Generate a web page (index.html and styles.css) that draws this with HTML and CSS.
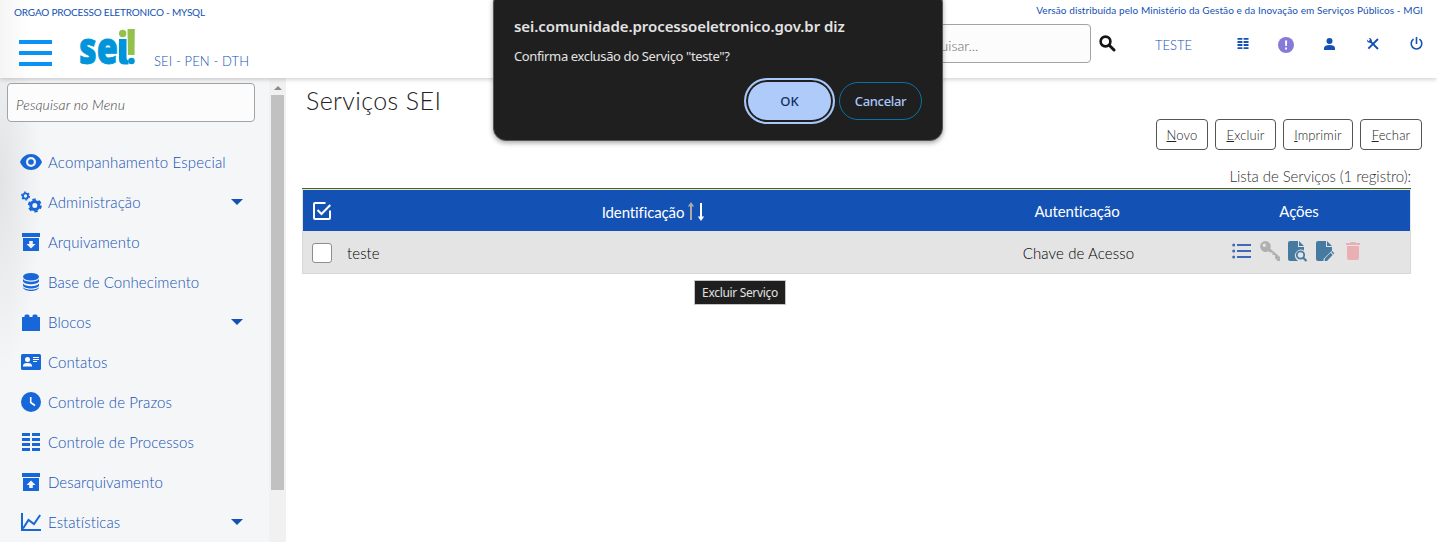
FILE: index.html
```html
<!DOCTYPE html>
<html lang="pt-BR">
<head>
<meta charset="utf-8">
<title>SEI - Serviços</title>
<link rel="stylesheet" href="styles.css">
</head>
<body>
<svg class="defs" width="0" height="0">
  <symbol id="rows" viewBox="0 0 18 18"><path d="M0 0h8v3H0zM10 0h8v3h-8zM0 5h8v3H0zM10 5h8v3h-8zM0 10h8v3H0zM10 10h8v3h-8zM0 15h8v3H0zM10 15h8v3h-8z"/></symbol>
  <symbol id="caret" viewBox="0 0 12 6"><path d="M0 0h12L6 6z"/></symbol>
</svg>
<header class="topbar">
  <div class="brand">
    <div class="org">ORGAO PROCESSO ELETRONICO - MYSQL</div>
    <div class="brand-row">
      <div class="burger"><i></i><i></i><i></i></div>
      <svg class="logo" width="58" height="42" viewBox="0 0 58 42">
        <text class="logo-text" x="0" y="36" textLength="39" lengthAdjust="spacingAndGlyphs">se</text>
        <path class="logo-blue" d="M40 11h7.500v19q0 2 2 2.500v4h-4q-5.500 0-5.500-5z"/>
        <circle class="logo-green" cx="43.700" cy="5.500" r="3.700"/>
        <path class="logo-green" d="M48.500 1h7.300l-.3 26h-6.500z"/>
        <circle class="logo-blue" cx="52.500" cy="33" r="3.300"/>
      </svg>
      <div class="system">SEI - PEN - DTH</div>
    </div>
  </div>
  <div class="tools">
    <div class="version">Versão distribuída pelo Ministério da Gestão e da Inovação em Serviços Públicos - MGI</div>
    <div class="tool-row">
      <div class="search">Pesquisar...</div>
      <svg class="lens" width="17" height="17" viewBox="0 0 17 17"><circle cx="6.500" cy="6.500" r="4.900" fill="none" stroke="#151515" stroke-width="2.600"/><path d="M10 10l5 5" stroke="#151515" stroke-width="3" stroke-linecap="round"/></svg>
      <div class="user">TESTE</div>
      <svg class="t-rows" width="12" height="11"><use href="#rows" width="12" height="11"/></svg>
      <svg class="t-alert" width="16" height="16" viewBox="0 0 16 16"><circle cx="8" cy="8" r="8" fill="#8579d9"/><path d="M7 3.500h2.200L8.900 9H7.300zM7.100 10.500h1.900v2H7.100z" fill="#fff"/></svg>
      <svg class="t-user" width="11" height="12" viewBox="0 0 11 12"><circle cx="5.500" cy="3" r="3"/><path d="M0 12v-2c0-2 2.500-3 5.500-3s5.500 1 5.500 3v2z"/></svg>
      <svg class="t-wrench" width="12" height="12" viewBox="0 0 12 12"><path d="M11 1L1.300 10.700M3.200 3.200l7.800 7.800" stroke="#1351b4" stroke-width="1.900"/><path d="M0 1.600L1.600 3.200 3 1.800 1.600.2 3.500.2 4.800 2v1.800L3.800 4.800H2L.2 3.400z"/></svg>
      <svg class="t-power" width="13" height="13" viewBox="0 0 13 13"><path d="M3.600 2.200a5.300 5.300 0 1 0 5.800 0M6.500 0v7" fill="none" stroke="#1351b4" stroke-width="1.600"/></svg>
    </div>
  </div>
</header>
<div class="body">
  <aside class="side">
    <nav class="side-main">
      <div class="menu-search">Pesquisar no Menu</div>
      <ul class="menu">
        <li><svg width="22" height="16" viewBox="0 0 22 16"><path fill-rule="evenodd" d="M11 0C6 0 2 3 0 8c2 5 6 8 11 8s9-3 11-8c-2-5-6-8-11-8zm0 13a5 5 0 1 1 0-10 5 5 0 0 1 0 10zm0-2.200a2.800 2.800 0 1 0 0-5.600 2.800 2.800 0 0 0 0 5.600z"/></svg><span class="m1">Acompanhamento Especial</span></li>
        <li><svg width="22" height="22" viewBox="0 0 22 22"><g fill="none" stroke="#1867d9"><circle cx="5.500" cy="5" r="2.600" stroke-width="1.900"/><circle cx="5.500" cy="5" r="3.900" stroke-width="1.300" stroke-dasharray="2 2.084"/><circle cx="14.800" cy="14.500" r="4" stroke-width="3"/><circle cx="14.800" cy="14.500" r="6" stroke-width="2" stroke-dasharray="3.400 2.883"/></g></svg><span>Administração</span><svg class="caret" width="12" height="6"><use href="#caret"/></svg></li>
        <li><svg width="18" height="18" viewBox="0 0 18 18"><path fill-rule="evenodd" d="M0 0h18v4H0zM1 5h16v13H1zM7.200 8v3H4.500L9 15.500l4.500-4.500h-2.700V8z"/></svg><span>Arquivamento</span></li>
        <li><svg width="16" height="18" viewBox="0 0 16 18"><ellipse cx="8" cy="3.800" rx="8" ry="3.800"/><path d="M0 6c2 3.500 14 3.500 16 0v2.300c-1 4-15 4-16 0zM0 10.500c2 3.500 14 3.500 16 0v2c-1 4-15 4-16 0zM0 14.300c2 3.300 14 3.300 16 0c-.5 5-15.500 5-16 0z"/></svg><span>Base de Conhecimento</span></li>
        <li><svg width="18" height="17" viewBox="0 0 18 17"><path d="M0 3h2.500V1.500C3 0 7 0 7.500 1.500V3h3V1.500C11 0 15 0 15.500 1.500V3H18v14H0z"/></svg><span>Blocos</span><svg class="caret" width="12" height="6"><use href="#caret"/></svg></li>
        <li><svg width="20" height="16" viewBox="0 0 20 16"><rect width="20" height="16" rx="1.500"/><g fill="#fff"><circle cx="6.500" cy="5.500" r="2.500"/><path d="M2 12.500v-1c0-3.300 9-3.300 9 0v1zM12 3h6v1h-6zM12 5h6v1h-6zM12 7h4v1h-4z"/></g></svg><span>Contatos</span></li>
        <li><svg width="20" height="20" viewBox="0 0 20 20"><circle cx="10" cy="10" r="10"/><path d="M9.700 5v5.500l4.300 3" fill="none" stroke="#fff" stroke-width="1.600"/></svg><span>Controle de Prazos</span></li>
        <li><svg width="18" height="18"><use href="#rows"/></svg><span>Controle de Processos</span></li>
        <li><svg width="18" height="18" viewBox="0 0 18 18"><path fill-rule="evenodd" d="M0 0h18v4H0zM1 5h16v13H1zM7.200 15v-3H4.500L9 7.500l4.500 4.500h-2.700v3z"/></svg><span>Desarquivamento</span></li>
        <li><svg width="20" height="18" viewBox="0 0 20 18"><path d="M1 0v17h19M2 15.500L7.500 7l5.500 4 6.200-9" fill="none" stroke="#1867d9" stroke-width="2"/></svg><span>Estatísticas</span><svg class="caret" width="12" height="6"><use href="#caret"/></svg></li>
      </ul>
    </nav>
    <div class="scroll"><svg width="8" height="4" viewBox="0 0 8 4"><path d="M0 4l4-4 4 4z" fill="#8b8b8b"/></svg><div class="thumb"></div></div>
  </aside>
  <main class="content">
    <h1 class="title">Serviços SEI</h1>
    <div class="actions">
      <button class="b1"><u>N</u>ovo</button><button class="b2"><u>E</u>xcluir</button><button class="b3"><u>I</u>mprimir</button><button class="b4"><u>F</u>echar</button>
    </div>
    <div class="caption">Lista de Serviços (1 registro):</div>
    <div class="table">
      <div class="row head">
        <div class="check"><svg width="18" height="18" viewBox="0 0 18 18"><path d="M12.500 1H2Q1 1 1 2v14q0 1 1 1h14q1 0 1-1V8.500M4.500 8l4 4L17.300 3" fill="none" stroke="#fff" stroke-width="2"/></svg></div>
        <div class="cell ident"><span>Identificação</span><svg width="18" height="19" viewBox="0 0 18 19"><path d="M3 4h2v14H3zM4 0l3.200 4.500H.8z" fill="#aaa"/><path d="M13 1h2v14h-2zM14 19l-3.200-4.500h6.400z" fill="#fff"/></svg></div>
        <div class="cell auth">Autenticação</div>
        <div class="cell acts">Ações</div>
      </div>
      <div class="row data">
        <div class="check"><div class="box"></div></div>
        <div class="cell name">teste</div>
        <div class="cell key">Chave de Acesso</div>
        <div class="icons">
          <svg width="20" height="16" viewBox="0 0 20 16"><path d="M5 1h14v2H5zM5 7h14v2H5zM5 13h14v2H5z" fill="#3f68b5"/><g fill="#3f68b5"><circle cx="1.700" cy="2" r="1.500"/><circle cx="1.700" cy="8" r="1.500"/><circle cx="1.700" cy="14" r="1.500"/></g></svg>
          <svg width="20" height="20" viewBox="0 0 20 20"><path fill-rule="evenodd" d="M5.500 0a5.500 5.500 0 1 0 3 10.200l1.500 1.300h2.500v2.500h2.500v3l2.500 3H20v-4l-9.700-8.300A5.500 5.500 0 0 0 5.500 0zM4.300 2.600a1.700 1.700 0 1 1 0 3.400 1.700 1.700 0 0 1 0-3.400z" fill="#b0b0b0"/></svg>
          <svg width="20" height="21" viewBox="0 0 20 21"><path d="M2 0h8v6h6v3.500A6 6 0 0 0 8 18l2 2H2q-2 0-2-2V2q0-2 2-2zM11 0l5 5h-5z" fill="#477aa0"/><circle cx="12.500" cy="14" r="3.700" fill="none" stroke="#477aa0" stroke-width="1.800"/><path d="M15 16.500l3.500 3.500" stroke="#477aa0" stroke-width="2.200"/></svg>
          <svg width="19" height="20" viewBox="0 0 19 20"><path d="M2 0h8v6h6v3.500L7.500 18v2H2q-2 0-2-2V2q0-2 2-2zM11 0l5 5h-5zM8.700 17.700l5.800-5.900 2.200 2.200L11 20H8.700zM15.200 11l.9-.9 2.200 2.200-.9.9z" fill="#477aa0"/></svg>
          <svg class="trash" width="14" height="18" viewBox="0 0 14 18"><path d="M0 1h4l1-1h4l1 1h4v2H0zM1 4h12v12q0 2-2 2H3q-2 0-2-2z" fill="#e9afb3"/></svg>
        </div>
      </div>
    </div>
  </main>
</div>
<div class="tooltip">Excluir Serviço</div>
<div class="dialog">
  <div class="d-title">sei.comunidade.processoeletronico.gov.br diz</div>
  <div class="d-text">Confirma exclusão do Serviço "teste"?</div>
  <div class="d-buttons"><div class="ok">OK</div><div class="cancel">Cancelar</div></div>
</div>
</body>
</html>
```
FILE: styles.css
```css
* { box-sizing: border-box; }
body { margin: 0; width: 1437px; height: 542px; overflow: hidden; background: #fff; font-family: Lato, sans-serif; font-weight: 300; white-space: nowrap; }
svg { display: block; flex: none; }
.defs { position: absolute; }
.topbar { position: relative; display: flex; justify-content: space-between; height: 78px; background: linear-gradient(90deg, #f5f5f5 0, #fff 30px); box-shadow: 0 1px 5px rgba(0,0,0,.22); z-index: 1; color: #1351b4; }
.brand { padding-left: 14px; }
.org { padding-top: 6px; font-size: 10px; line-height: 12px; font-weight: 400; letter-spacing: -.19px; }
.brand-row { display: flex; }
.burger { display: flex; flex-direction: column; gap: 7px; margin: 22px 0 0 5px; }
.burger i { width: 33px; height: 4px; background: #0a93f5; }
.logo { margin: 10px 0 0 27px; overflow: visible; }
.logo-text { font: 800 45px "Open Sans", sans-serif; fill: #0095da; stroke: #0095da; stroke-width: .8px; }
.logo-blue { fill: #0095da; }
.logo-green { fill: #93c14b; }
.system { margin: 35px 0 0 17px; font-size: 13px; line-height: 16px; letter-spacing: .13px; }
.tools { padding-right: 14px; }
.version { padding-top: 4px; text-align: right; font-size: 10px; line-height: 12px; font-weight: 400; letter-spacing: .09px; }
.tool-row { display: flex; align-items: center; justify-content: flex-end; margin-top: 8px; height: 39px; fill: #1351b4; }
.search { width: 200px; height: 39px; border: 1px solid #a1a4a6; border-radius: 4px; background: #fcfcfc; padding-left: 20px; line-height: 41px; font-size: 14px; color: #666; }
.lens { margin-left: 8px; }
.user { width: 37px; margin-left: 39px; padding-top: 2px; font-size: 13px; }
.t-rows { margin-left: 45px; }
.t-alert { margin: 2px 0 0 29px; }
.t-user { margin-left: 30px; }
.t-wrench { margin-left: 32px; }
.t-power { margin: 0 0 0 31px; }
.body { display: flex; height: 464px; }
.side { display: flex; width: 286px; background: #f5f6f8; }
.side-main { width: 269px; padding: 5px 0 0 7px; background: radial-gradient(ellipse 42px 190px at 0 105px, rgba(0,0,0,.08), transparent); }
.menu-search { width: 248px; height: 39px; border: 1px solid #a1a4a6; border-radius: 4px; background: #fcfcfc; padding-left: 8px; line-height: 41px; font-size: 14px; font-style: italic; font-weight: 300; letter-spacing: .1px; color: #444; }
.menu { list-style: none; margin: 20px 0 0; padding: 0 26px 0 14px; fill: #1867d9; }
.menu li { display: grid; grid-template-columns: 20px 1fr 12px; column-gap: 7px; align-items: center; height: 40px; font-size: 15px; letter-spacing: .08px; color: #1351b4; }
.menu li > svg:first-child { justify-self: center; }
.menu span { padding-bottom: 1px; line-height: 18px; }
.menu .m1 { letter-spacing: .17px; }
.caret { fill: #1351b4; }
.scroll { width: 17px; background: #f1f1f1; padding: 8px 2px 0; }
.scroll svg { margin-left: 3px; }
.thumb { width: 13px; height: 395px; margin-top: 5px; background: #c1c1c1; }
.content { width: 1151px; padding-left: 16px; }
.title { margin: 0; padding: 7px 0 0 4px; font-size: 25px; line-height: 31px; font-weight: 300; letter-spacing: .4px; color: #222; }
.actions { display: flex; justify-content: flex-end; gap: 7px; margin-top: 3px; padding-right: 15px; }
.actions button { height: 31px; padding: 1px 0 0; border: 1px solid #555; border-radius: 4px; background: #fff; font: 300 13px Lato, sans-serif; letter-spacing: .15px; color: #222; }
.b1 { width: 52px; } .b2 { width: 61px; } .b3 { width: 70px; } .b4 { width: 62px; }
.caption { height: 38px; padding: 17px 26px 0 0; text-align: right; font-size: 15px; line-height: 18px; letter-spacing: -.07px; color: #333; }
.table { width: 1109px; border-top: 1px solid #46650f; }
.row { display: grid; grid-template-columns: 40px 624px 223px 221px; align-items: center; font-size: 15px; }
.head { height: 42px; border: 1px solid #e4e4e4; border-bottom: 0; background: #1351b4; color: #fff; font-weight: 400; letter-spacing: -.12px; }
.data { height: 43px; border: 1px solid #d8d8d8; border-top: 0; background: #e4e4e4; color: #000; letter-spacing: .1px; }
.cell { text-align: center; }
.auth, .acts { padding: 1px 3px 0 0; }
.check { padding-left: 9px; }
.head .check { padding-left: 10px; }
.data .check { padding-top: 1px; }
.box { width: 20px; height: 20px; border: 1px solid #8d8d8d; border-radius: 3px; background: #fff; }
.ident { display: flex; justify-content: center; align-items: center; gap: 3px; padding: 1px 3px 0 0; }
.ident span { padding-top: 1px; }
.name { text-align: left; padding-left: 4px; }
.key, .name { padding-top: 1px; }
.icons { display: flex; align-items: center; gap: 8px; padding: 0 0 2px 42px; }
.trash { margin-left: 3px; }
.tooltip { position: absolute; left: 694px; top: 280px; width: 92px; height: 25px; border: 1px solid #c5c5c5; background: #1f1f1f; color: #e2e2e2; font: 12px/24px "Noto Sans", sans-serif; letter-spacing: -.33px; text-align: center; }
.dialog { position: absolute; z-index: 2; left: 493px; top: -10px; width: 450px; height: 151px; padding: 25px 20px 0; border: 1px solid #555; border-radius: 13px; background: #1f1f1f; box-shadow: 0 2px 5px rgba(0,0,0,.35); color: #e3e3e3; font-family: "Noto Sans", sans-serif; }
.d-title { font-size: 15px; line-height: 20px; font-weight: 600; letter-spacing: -.07px; }
.d-text { margin-top: 10px; font-size: 13px; line-height: 20px; font-weight: 400; letter-spacing: -.37px; }
.d-buttons { display: flex; justify-content: flex-end; align-items: center; gap: 4px; margin-top: 12px; font-size: 13px; font-weight: 500; }
.ok { width: 91px; height: 46px; border: 2px solid #a8c7fa; border-radius: 23px; padding: 2px; background: #1f1f1f; box-shadow: inset 0 0 0 2px #1f1f1f, inset 0 0 0 30px #aecbfa; color: #12305f; line-height: 38px; text-align: center; }
.cancel { width: 83px; height: 38px; border: 1px solid #0b72a8; border-radius: 19px; color: #a8c7fa; line-height: 36px; letter-spacing: -.35px; text-align: center; }
```
